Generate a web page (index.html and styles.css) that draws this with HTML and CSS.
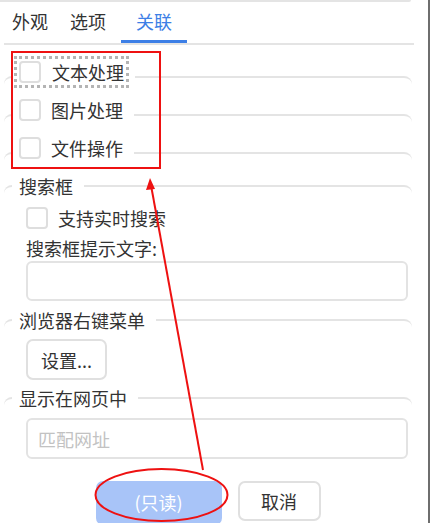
FILE: index.html
```html
<!DOCTYPE html>
<html lang="zh">
<head>
<meta charset="utf-8">
<title>关联</title>
<link rel="stylesheet" href="styles.css">
</head>
<body>
<div class="window">
  <div class="topline"></div>
  <div class="tabs">
    <div class="tab first">外观</div>
    <div class="tab">选项</div>
    <div class="tab active">关联</div>
  </div>

  <div class="form">
    <fieldset class="fs fs-check">
      <legend class="lg-check"><label class="chk focused"><input type="checkbox"><span>文本处理</span></label></legend>
    </fieldset>
    <fieldset class="fs fs-check">
      <legend class="lg-check"><label class="chk"><input type="checkbox"><span>图片处理</span></label></legend>
    </fieldset>
    <fieldset class="fs fs-check last-check">
      <legend class="lg-check"><label class="chk"><input type="checkbox"><span>文件操作</span></label></legend>
    </fieldset>

    <fieldset class="fs fs-search">
      <legend class="lg-text">搜索框</legend>
      <div class="fs-body">
        <label class="chk row"><input type="checkbox"><span>支持实时搜索</span></label>
        <div class="field-label">搜索框提示文字:</div>
        <input class="text-input" type="text">
      </div>
    </fieldset>

    <fieldset class="fs fs-menu">
      <legend class="lg-text">浏览器右键菜单</legend>
      <div class="fs-body">
        <button class="btn btn-settings">设置...</button>
      </div>
    </fieldset>

    <fieldset class="fs fs-page">
      <legend class="lg-text">显示在网页中</legend>
      <div class="fs-body">
        <input class="text-input" type="text" placeholder="匹配网址">
      </div>
    </fieldset>

    <div class="actions">
      <button class="btn btn-primary">(只读)</button>
      <button class="btn btn-cancel">取消</button>
    </div>
  </div>

  <svg class="annot" width="430" height="523" viewBox="0 0 430 523">
    <rect x="12" y="52" width="148" height="116" fill="none" stroke="#ee1111" stroke-width="2"/>
    <line x1="203" y1="470" x2="151.5" y2="188" stroke="#ee1111" stroke-width="2"/>
    <polygon points="150,178 146,190 155,189" fill="#ee1111"/>
    <ellipse cx="161.5" cy="495" rx="66" ry="26" fill="none" stroke="#ee1111" stroke-width="2"/>
  </svg>
</div>
</body>
</html>
```

FILE: styles.css
```css
* { box-sizing: border-box; }

html, body {
  margin: 0;
  padding: 0;
  background: #ffffff;
}

body {
  font-family: "Noto Sans CJK SC", "Noto Sans", sans-serif;
  font-size: 18px;
  color: #333333;
  overflow: hidden;
}

.window {
  position: relative;
  width: 430px;
  height: 523px;
  border-right: 2px solid #6e6e6e;
  overflow: hidden;
}

.topline {
  width: 411px;
  height: 2px;
  background: #e4e4e4;
  border-radius: 0 0 3px 0;
}

.tabs {
  display: flex;
  margin-left: 4px;
  width: 410px;
  border-bottom: 2px solid #e4e4e4;
}

.tab {
  height: 41px;
  line-height: 38px;
  padding: 0 11px;
  border-bottom: 3px solid transparent;
  white-space: nowrap;
}

.tab.first { padding-left: 8px; }

.tab.active {
  margin-left: 4px;
  padding: 0 15px;
  color: #3d7fe6;
  border-bottom-color: #3d7fe6;
}

.form {
  padding: 16px 0 0 4px;
}

.fs {
  width: 408px;
  margin: 0 0 6px 0;
  padding: 0 4px 0 8px;
  border: none;
  border-top: 2px solid #e4e4e4;
  border-radius: 8px;
  min-width: 0;
}

.fs-check.last-check { margin-bottom: 5px; }

.fs-body {
  padding-left: 14px;
}

.lg-check {
  display: block;
  height: 32px;
  padding: 0 11px 10px 7px;
  line-height: 22px;
}

.lg-text {
  padding: 0 11px 0 7px;
  line-height: 24px;
  height: 24px;
}

.chk {
  display: flex;
  align-items: center;
  gap: 10px;
  height: 22px;
  line-height: 22px;
  white-space: nowrap;
}

.chk.focused span { margin-left: 1px; }

.chk.focused {
  outline: 3px dotted #b4b4b4;
  outline-offset: 2px;
}

.chk input {
  appearance: none;
  -webkit-appearance: none;
  width: 22px;
  height: 22px;
  margin: 0;
  border: 2px solid #dedede;
  border-radius: 4px;
  background: #ffffff;
  flex: none;
}

.chk.row {
  margin-top: 9px;
}

.field-label {
  margin-top: 7px;
  line-height: 24px;
}

.text-input {
  display: block;
  width: 100%;
  height: 40px;
  margin: 1px 0 1px 0;
  padding: 0 10px;
  border: 2px solid #e3e3e3;
  border-radius: 6px;
  font-family: inherit;
  font-size: 18px;
  color: #333333;
  background: #ffffff;
  outline: none;
}

.text-input::placeholder { color: #c2c2c2; }

.fs-page .text-input {
  margin-top: 8px;
  height: 41px;
}

.btn {
  font-family: inherit;
  font-size: 18px;
  color: #333333;
  background: #ffffff;
  border: 2px solid #e0e0e0;
  border-radius: 7px;
  padding: 0;
  line-height: 1;
}

.btn-settings {
  display: block;
  width: 81px;
  height: 41px;
  margin-top: 7px;
}

.actions {
  display: flex;
  align-items: flex-start;
  justify-content: center;
  gap: 16px;
  margin-top: 21px;
  width: 408px;
}

.btn-primary {
  width: 126px;
  height: 44px;
  padding-bottom: 3px;
  background: #a8c4f8;
  border-color: #a8c4f8;
  color: #ffffff;
}

.btn-cancel {
  width: 83px;
  height: 40px;
}

.annot {
  position: absolute;
  left: 0;
  top: 0;
  pointer-events: none;
}
```
